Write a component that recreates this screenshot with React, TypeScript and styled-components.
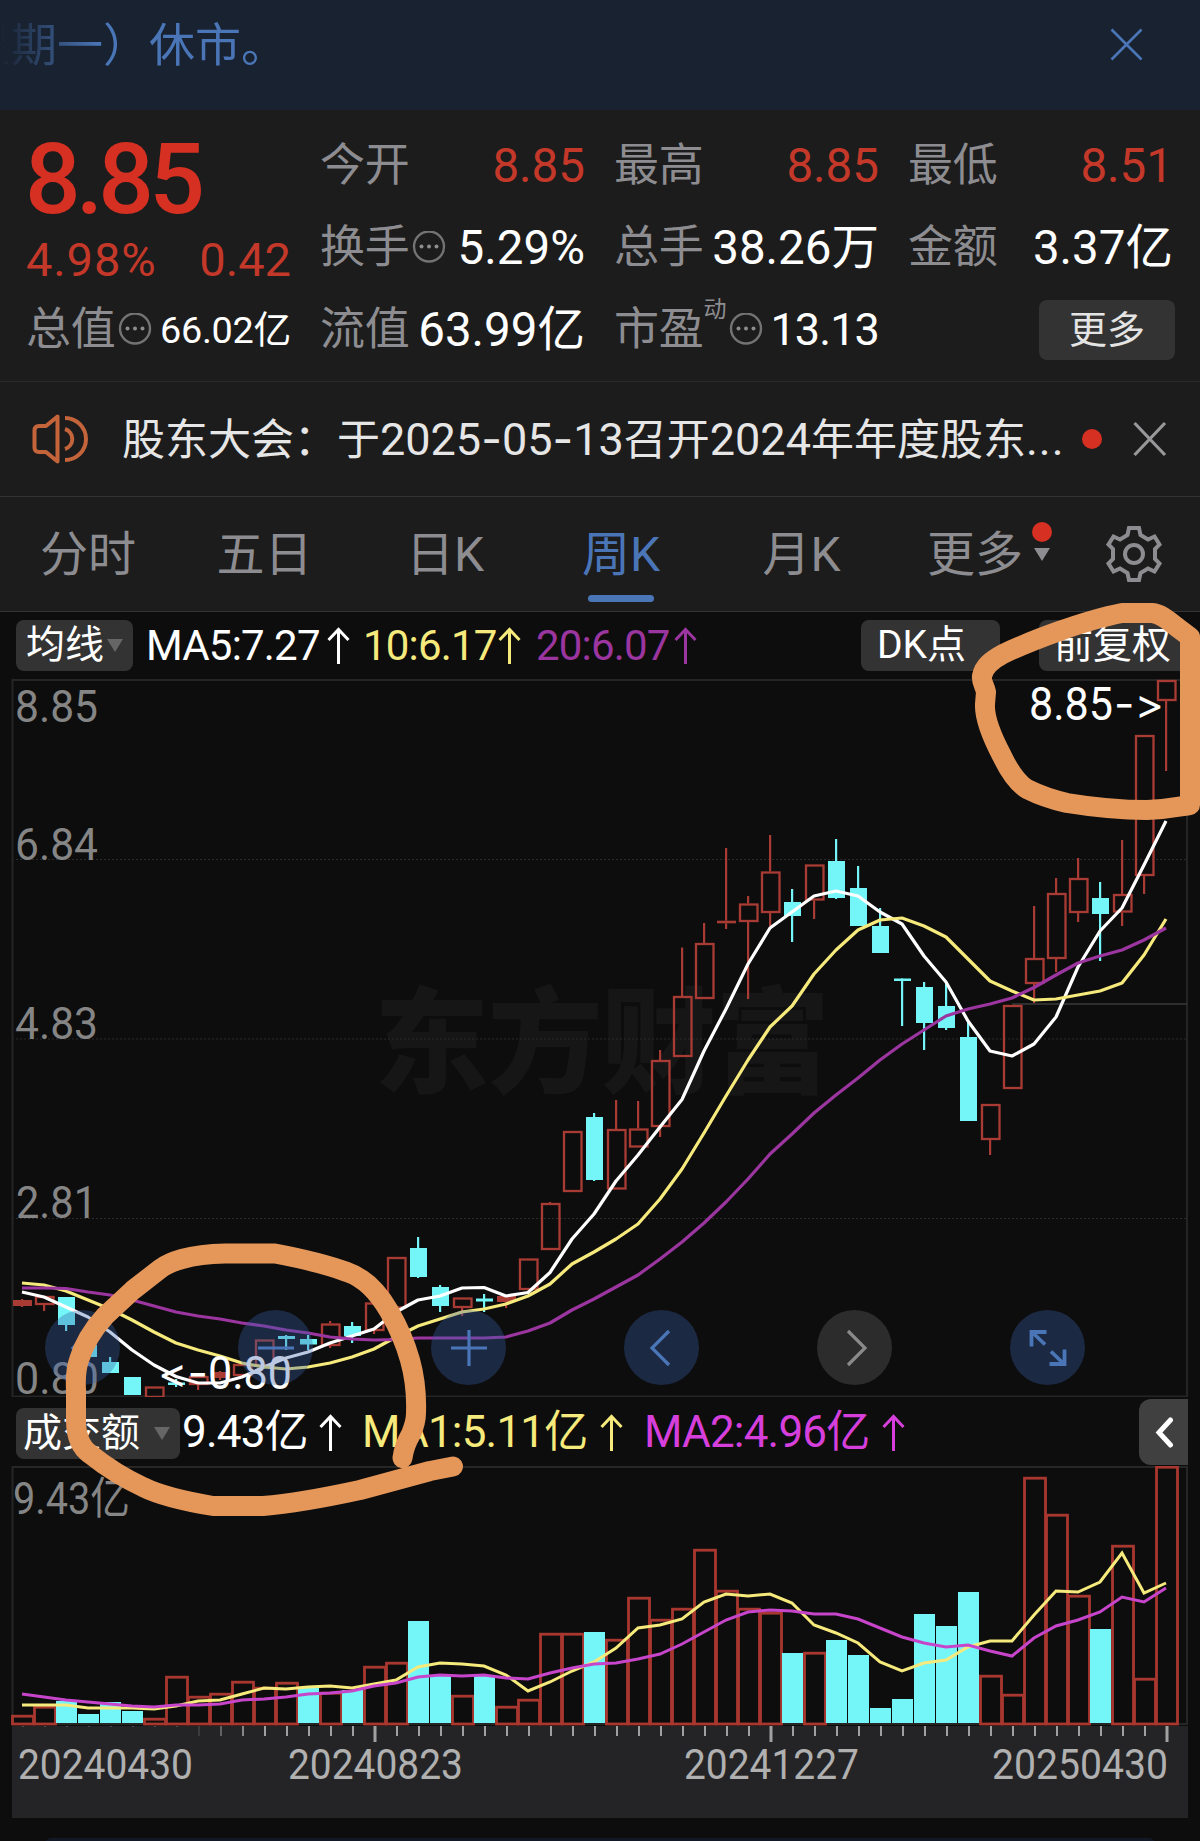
import React from "react";
import styled, { createGlobalStyle, css } from "styled-components";

const RED = "#d63022";
const RED_SOFT = "#c4382a";
const CANDLE_RED = "#a83b33";
const CYAN = "#74f5f7";
const BLUE = "#4a76b8";
const GREY = "#8d8d91";
const YELLOW = "#f6ea7c";

const GlobalStyle = createGlobalStyle`
  * { box-sizing: border-box; }
  body {
    margin: 0;
    background: #0d0d0d;
    font-family: Roboto, "Noto Sans CJK SC", sans-serif;
    color: #fff;
  }
`;

const Page = styled.main`
  width: 1200px;
  height: 1841px;
  position: relative;
  overflow: hidden;
  background: #0d0d0d;
  display: flex;
  flex-direction: column;
  white-space: nowrap;
  line-height: 1;
`;

const Banner = styled.header`
  height: 110px;
  flex: none;
  background: #192230;
  display: flex;
  justify-content: space-between;
  align-items: flex-start;
  padding: 20px 57px 0 0;
`;

const BannerText = styled.div`
  width: 320px;
  height: 50px;
  line-height: 50px;
  font-size: 46px;
  color: ${BLUE};
  text-indent: -35px;
  overflow: hidden;
  mask-image: linear-gradient(90deg, transparent 0, rgba(0, 0, 0, 0.35) 35px, #000 100px);
`;

const BannerClose = styled.svg`
  margin-top: 8px;
`;

const Quote = styled.section`
  height: 272px;
  flex: none;
  background: #1c1c1c;
  display: grid;
  grid-template-columns: repeat(4, 265px);
  column-gap: 29px;
  grid-template-rows: 82px 82px 82px;
  padding: 15px 0 0 26px;
  border-bottom: 1px solid #2a2a2a;
`;

const PriceBlock = styled.div`
  grid-row: 1 / span 2;
  display: flex;
  flex-direction: column;
`;

const Price = styled.div`
  font-size: 98px;
  font-weight: 500;
  line-height: 98px;
  letter-spacing: -4.8px;
  color: ${RED};
  margin: 6px 0 0 -1px;
`;

const ChangeRow = styled.div`
  display: flex;
  justify-content: space-between;
  font-size: 47px;
  line-height: 47px;
  margin-top: 7px;
  color: ${RED_SOFT};
  padding-right: 0;
`;

const Percent = styled.span`
  letter-spacing: 0.9px;
`;

const Cell = styled.div`
  display: flex;
  align-items: center;
  height: 82px;
`;

const Label = styled.span`
  font-size: 45px;
  line-height: 60px;
  letter-spacing: -0.2px;
  color: ${GREY};
`;

const Value = styled.span<{ $tone?: string; $size?: number; $track?: number }>`
  margin-left: auto;
  font-size: ${(p) => p.$size ?? 47.5}px;
  line-height: 60px;
  letter-spacing: ${(p) => p.$track ?? 0}px;
  color: ${(p) => p.$tone ?? "#fff"};
`;

const Sup = styled.span`
  width: 24px;
  font-size: 23px;
  line-height: 24px;
  color: ${GREY};
  align-self: flex-start;
  margin: 9px -1px 0 0;
`;

const InfoDot = styled.svg`
  flex: none;
  margin: 0 0 0 2px;
`;

const MoreButton = styled.button`
  width: 136px;
  height: 60px;
  margin-left: auto;
  margin-right: -2px;
  border: 0;
  border-radius: 8px;
  background: #333;
  color: #e4e4e4;
  font: 38px/55px Roboto, "Noto Sans CJK SC", sans-serif;
  padding: 0;
`;

const Notice = styled.section`
  height: 115px;
  flex: none;
  background: #1c1c1c;
  border-bottom: 1px solid #333;
  display: flex;
  align-items: center;
  padding-left: 30px;
`;

const NoticeText = styled.div`
  width: 960px;
  margin-left: 32px;
  font-size: 43px;
  line-height: 60px;
  color: #e6e6e6;
  display: flex;
  align-items: baseline;
`;

const Digits = styled.span<{ $track?: number }>`
  font-size: 45px;
  letter-spacing: ${(p) => p.$track ?? 0}px;
`;

const Dash = styled.span`
  font-family: Inter, sans-serif;
`;

const Dot = styled.i`
  display: block;
  flex: none;
  width: 20px;
  height: 20px;
  border-radius: 50%;
  background: ${RED};
`;

const NoticeClose = styled.svg`
  margin-left: 31px;
`;

const Tabs = styled.nav`
  height: 115px;
  flex: none;
  background: #1c1c1c;
  border-bottom: 1px solid #343436;
  display: flex;
  align-items: stretch;
`;

const Tab = styled.div<{ $active?: boolean; $w: number }>`
  width: ${(p) => p.$w}px;
  flex: none;
  font-size: 48px;
  line-height: 116px;
  text-align: center;
  color: ${(p) => (p.$active ? BLUE : GREY)};
  ${(p) =>
    p.$active &&
    css`
      &::after {
        content: "";
        display: block;
        width: 66px;
        height: 7px;
        margin: -18px auto 0;
        border-radius: 3.5px;
        background: ${BLUE};
      }
    `}
`;

const MoreMark = styled.div`
  width: 20px;
  flex: none;
  margin-left: -20px;
  display: flex;
  flex-direction: column;
  align-items: center;
  padding-top: 25px;
  gap: 6px;
`;

const Triangle = styled.i<{ $color: string }>`
  flex: none;
  width: 16px;
  height: 13px;
  background: ${(p) => p.$color};
  clip-path: polygon(0 0, 100% 0, 50% 100%);
`;

const CornerMark = styled.i`
  flex: none;
  align-self: flex-end;
  width: 12px;
  height: 12px;
  margin: 0 -4px 9px 0;
  background: #fff;
  clip-path: polygon(100% 0, 100% 100%, 0 100%);
`;

const Gear = styled.svg`
  margin: 24px 0 0 51px;
`;

const StatRow = styled.div<{ $h: number; $pt: number }>`
  height: ${(p) => p.$h}px;
  flex: none;
  display: flex;
  align-items: flex-start;
  padding: ${(p) => p.$pt}px 0 0 16px;
`;

const Chip = styled.div<{ $w: number; $pad: number; $ml?: number }>`
  width: ${(p) => p.$w}px;
  height: 51px;
  flex: none;
  margin-left: ${(p) => p.$ml ?? 0}px;
  border-radius: 8px;
  background: #333;
  font-size: 39px;
  line-height: 47px;
  padding: 0 10px 0 ${(p) => p.$pad}px;
  display: flex;
  align-items: center;
  justify-content: space-between;
`;

const Stat = styled.div<{ $w: number; $color: string; $size?: number; $gap?: number }>`
  width: ${(p) => p.$w}px;
  height: 51px;
  font-size: ${(p) => p.$size ?? 42}px;
  line-height: 51px;
  letter-spacing: -0.8px;
  color: ${(p) => p.$color};
  display: flex;
  align-items: center;
  justify-content: space-between;
  padding-right: ${(p) => p.$gap ?? 15}px;
`;

const Stats = styled.div<{ $ml: number; $shift?: number }>`
  display: flex;
  margin-left: ${(p) => p.$ml}px;
  margin-top: ${(p) => p.$shift ?? 0}px;
`;

const Collapse = styled.div`
  width: 49px;
  height: 66px;
  margin-left: auto;
  margin-right: 12px;
  margin-top: -9px;
  border-radius: 12px 0 0 12px;
  background: #404040;
  display: flex;
  align-items: center;
  justify-content: center;
`;

const ChartArea = styled.section<{ $h: number }>`
  position: relative;
  height: ${(p) => p.$h}px;
  flex: none;
`;

const ChartSvg = styled.svg`
  display: block;
`;

const PointerText = styled.text`
  font-family: Inter, sans-serif;
  font-size: 42px;
  font-feature-settings: "calt" 0, "liga" 0, "dlig" 0;
  font-variant-ligatures: none;
`;

const Controls = styled.div`
  position: absolute;
  left: 45px;
  top: 631px;
  display: flex;
  gap: 118px;
`;

const Round = styled.div<{ $muted?: boolean }>`
  width: 75px;
  height: 75px;
  border-radius: 50%;
  background: ${(p) => (p.$muted ? "rgba(92, 92, 92, 0.4)" : "rgba(57, 98, 169, 0.34)")};
  display: flex;
  align-items: center;
  justify-content: center;
`;

const Axis = styled.footer`
  width: 1176px;
  height: 92px;
  flex: none;
  margin-left: 12px;
  background: #242426;
`;

const Sheet = styled.div`
  width: 1110px;
  height: 12px;
  flex: none;
  margin: 20px auto 0;
  border-radius: 12px;
  background: #121826;
`;

const Marker = styled.svg`
  position: absolute;
  left: 0;
  top: 0;
  pointer-events: none;
`;

/* Weekly candles: up flag, body top, body bottom, wick top, wick bottom */
type Candle = [0 | 1, number, number, number, number];
const candles: Candle[] = [
  [1, 1300, 1306, 1299, 1307], [1, 1296, 1305, 1296, 1311], [0, 1297, 1325, 1297, 1331], [0, 1345, 1357, 1342, 1357],
  [0, 1362, 1373, 1357, 1373], [0, 1377, 1395, 1377, 1395], [1, 1386.5, 1398, 1386.5, 1398], [0, 1382.5, 1385, 1379, 1387],
  [1, 1376, 1385, 1376, 1390], [1, 1372, 1378, 1371, 1380], [1, 1364, 1376, 1364, 1376], [1, 1339.5, 1366, 1339.5, 1366],
  [0, 1336, 1339, 1335, 1350], [0, 1339, 1344.5, 1335, 1350], [1, 1323.5, 1346, 1321, 1348], [0, 1326, 1336, 1322, 1343],
  [1, 1302.5, 1331, 1302.5, 1334], [1, 1257, 1308.5, 1257, 1308.5], [0, 1248, 1277, 1237, 1278], [0, 1287, 1306, 1285, 1312],
  [1, 1297.5, 1308, 1297.5, 1316], [0, 1298.5, 1301.5, 1294, 1312], [1, 1296, 1302, 1296, 1308], [1, 1258.5, 1290, 1258.5, 1290],
  [1, 1203, 1250, 1202, 1250], [1, 1131, 1192, 1131, 1192], [0, 1117, 1180, 1113, 1181], [1, 1129, 1189.5, 1100, 1189.5],
  [1, 1128.5, 1147.5, 1101, 1147.5], [1, 1060, 1127, 1050, 1137], [1, 996, 1057, 947.5, 1057], [1, 943, 999, 923, 999],
  [1, 920.7, 923.3, 848, 929], [1, 903.5, 922, 896, 999], [1, 871.5, 913, 835, 926], [0, 902, 916, 889, 942],
  [1, 864.5, 900.5, 864.5, 919], [0, 861, 898, 839, 899], [0, 888, 926, 866, 926], [0, 926, 953, 908, 953],
  [0, 978.5, 981, 978.5, 1026], [0, 987, 1023, 982, 1050], [0, 1006, 1028, 982, 1030], [0, 1037, 1121, 1022, 1121],
  [1, 1104, 1140, 1104, 1155], [1, 1005, 1089, 1005, 1089], [1, 958, 984, 906, 1003], [1, 893, 959, 878, 972],
  [1, 878, 913, 858, 922], [0, 898, 914, 882, 961], [1, 894, 912.5, 840, 926], [1, 735, 876, 735, 894],
  [1, 680, 701, 680, 771],
];

const ma5 = [1292, 1297, 1307, 1317, 1332, 1350, 1365, 1376.5, 1383, 1383, 1377, 1367, 1358, 1352, 1343, 1336, 1329, 1312, 1300, 1296, 1288, 1287.5, 1296, 1292.5, 1272.5, 1239, 1214, 1181, 1155, 1127, 1099.5, 1051, 1009, 964, 928, 912, 896, 891, 896, 912, 924, 956, 982, 1021, 1051, 1056, 1044, 1017, 967, 931, 908, 865, 821];
const ma10 = [1283, 1285, 1291, 1300, 1309, 1320, 1332, 1343, 1350, 1356, 1363, 1367, 1369, 1367, 1363, 1357, 1349, 1337, 1326, 1319, 1312, 1309, 1304, 1296, 1284, 1264, 1252, 1239, 1224, 1199, 1169, 1133, 1096, 1060, 1027, 1006, 974, 950, 930, 920, 918, 926, 937, 959, 981, 991, 1000, 999, 995, 991, 983, 955, 919];
const ma20 = [1288, 1288, 1288.5, 1292, 1295, 1300, 1306, 1312, 1316, 1319, 1323, 1326, 1330, 1333, 1337, 1339, 1340, 1339.5, 1338, 1338, 1338, 1338, 1337, 1331, 1323, 1310, 1299, 1287, 1275, 1259, 1242, 1223, 1202, 1179, 1154, 1134, 1113, 1095, 1078, 1060, 1044, 1030, 1016, 1009, 1004, 998, 987.5, 975, 963, 956, 950, 940, 928];

const volumeTop = [1715, 1706, 1701, 1714, 1702, 1711, 1718, 1676, 1696, 1693, 1681, 1687, 1682, 1687, 1692, 1690, 1666, 1662, 1621, 1676, 1695, 1676, 1706, 1699, 1633, 1633, 1632, 1639, 1597, 1619, 1608, 1549, 1590, 1608, 1612, 1653, 1652, 1640, 1655, 1708, 1699, 1614, 1626, 1592, 1675, 1694, 1477, 1514, 1595, 1629, 1545, 1678, 1466];
const volumeUp = [1, 1, 0, 0, 0, 0, 1, 1, 1, 1, 1, 1, 1, 0, 1, 0, 1, 1, 0, 0, 1, 0, 1, 1, 1, 1, 0, 1, 1, 1, 1, 1, 1, 1, 1, 0, 1, 0, 0, 0, 0, 0, 0, 0, 1, 1, 1, 1, 1, 0, 1, 1, 1];
const volMa1 = [1705, 1705, 1705, 1708, 1708, 1708, 1709, 1706, 1701, 1700, 1694, 1688, 1689, 1687, 1686, 1688, 1684, 1680, 1667, 1663, 1664, 1666, 1675, 1691, 1682, 1671, 1662, 1648, 1628, 1625, 1619, 1602, 1594, 1596, 1594, 1603, 1625, 1633, 1643, 1662, 1671, 1663, 1660, 1647, 1641, 1641, 1615, 1591, 1592, 1582, 1553, 1593, 1583];
const volMa2 = [1694, 1697, 1700, 1702, 1704, 1706, 1707, 1705, 1705, 1704, 1700, 1699, 1697, 1694, 1693, 1691, 1686, 1683, 1677, 1675, 1676, 1675, 1678, 1679, 1673, 1668, 1664, 1663, 1659, 1654, 1644, 1632, 1620, 1612, 1610, 1611, 1614, 1614, 1619, 1628, 1637, 1643, 1647, 1645, 1651, 1656, 1638, 1626, 1620, 1612, 1597, 1602, 1588];

const xAt = (i: number) => 22 + 22 * i;
const points = (ys: number[]) => ys.map((y, i) => `${xAt(i)},${y}`).join(" ");

const CandleMark = ({ c, i }: { c: Candle; i: number }) => {
  const [up, top, bottom, high, low] = c;
  const x = xAt(i);
  if (!up) {
    return (
      <g fill={CYAN}>
        <rect x={x - 1} y={high} width={2.2} height={low - high} />
        <rect x={x - 8} y={top} width={17} height={bottom - top} />
      </g>
    );
  }
  const thin = bottom - top < 7;
  return (
    <g fill={CANDLE_RED}>
      {top > high && <rect x={x - 1} y={high} width={2.2} height={top - high} />}
      {low > bottom && <rect x={x - 1} y={bottom} width={2.2} height={low - bottom} />}
      {thin ? (
        <rect x={x - 9} y={top} width={19} height={bottom - top} />
      ) : (
        <rect x={x - 8} y={top + 1} width={17.5} height={bottom - top - 2} fill="none" stroke={CANDLE_RED} strokeWidth={2.3} />
      )}
    </g>
  );
};

const Info = () => (
  <InfoDot width="34" height="34" viewBox="0 0 34 34">
    <circle cx="17" cy="15.5" r="15" fill="none" stroke="#737375" strokeWidth="2.4" />
    <circle cx="9.5" cy="15.5" r="2" fill="#8d8d91" />
    <circle cx="17" cy="15.5" r="2" fill="#8d8d91" />
    <circle cx="24.5" cy="15.5" r="2" fill="#8d8d91" />
  </InfoDot>
);

const UpArrow = () => (
  <svg width="23" height="38" viewBox="0 0 23 38" fill="none" stroke="currentColor" strokeWidth="3">
    <path d="M11.5 37V3M1.5 13L11.5 2.5L21.5 13" />
  </svg>
);

const PriceChart = () => (
  <ChartSvg width="1200" height="718" viewBox="0 679 1200 718">
    <text x="374" y="1084" fontSize="115" fontWeight="900" fill="#161616" fontFamily='"Noto Sans CJK SC", sans-serif' textLength="456">
      东方财富
    </text>
    <g stroke="#2b2b2b" strokeWidth="1.2" strokeDasharray="2 2">
      <path d="M12 859.5H1187M12 1039H1187M12 1218.5H1187" />
    </g>
    <path d="M12.5 680H1187V1396.5H12.5Z" fill="none" stroke="#252525" strokeWidth="2" />
    <path d="M1012 1004H1187" stroke="#3a3a3a" strokeWidth="1.6" />
    <g fill="#858585" fontSize="45">
      <text x="15" y="722" textLength="83" lengthAdjust="spacingAndGlyphs">8.85</text>
      <text x="15" y="860" textLength="83" lengthAdjust="spacingAndGlyphs">6.84</text>
      <text x="15" y="1039" textLength="83" lengthAdjust="spacingAndGlyphs">4.83</text>
      <text x="16" y="1218" textLength="81" lengthAdjust="spacingAndGlyphs">2.81</text>
      <text x="15" y="1393.5" textLength="84" lengthAdjust="spacingAndGlyphs">0.80</text>
    </g>
    {candles.map((c, i) => (
      <CandleMark key={i} c={c} i={i} />
    ))}
    <g fill="none" strokeLinejoin="round" strokeWidth="3.2">
      <polyline points={points(ma5)} stroke="#fff" />
      <polyline points={points(ma10)} stroke={YELLOW} />
      <polyline points={points(ma20)} stroke="#9b359f" />
    </g>
    <g fill="#fff" fontSize="46">
      <text x="1029" y="719.5" textLength="84" lengthAdjust="spacingAndGlyphs">8.85</text>
      <PointerText x="1114" y="719" textLength="50" lengthAdjust="spacingAndGlyphs">-&gt;</PointerText>
      <PointerText x="158" y="1388" textLength="50" lengthAdjust="spacingAndGlyphs">&lt;-</PointerText>
      <text x="208" y="1389" textLength="84" lengthAdjust="spacingAndGlyphs">0.80</text>
    </g>
  </ChartSvg>
);

const VolumeChart = () => (
  <ChartSvg width="1200" height="260" viewBox="0 1466 1200 260">
    <path d="M12.5 1467H1187V1724H12.5Z" fill="none" stroke="#262626" strokeWidth="2" />
    <text x="13" y="1514" fontSize="44" fill="#858585" textLength="117" lengthAdjust="spacingAndGlyphs">9.43亿</text>
    {volumeTop.map((top, i) => {
      const x = xAt(i);
      return volumeUp[i] ? (
        <rect key={i} x={x - 9.5} y={top + 1.2} width={21} height={Math.max(1722.8 - top, 2)} fill="none" stroke="#a8372f" strokeWidth={2.8} />
      ) : (
        <rect key={i} x={x - 10} y={top} width={21} height={1723 - top} fill={CYAN} />
      );
    })}
    <g fill="none" strokeWidth="3">
      <polyline points={points(volMa1)} stroke={YELLOW} />
      <polyline points={points(volMa2)} stroke="#c745cb" />
    </g>
  </ChartSvg>
);

const AxisDrawing = () => (
  <ChartSvg width="1176" height="92" viewBox="12 1726 1176 92">
    {candles.map((_, i) => {
      const major = i === 16 || i === 34 || i === 52;
      const fade = i < 8 ? 0.35 : i === 8 ? 0.2 : i === 9 ? 0.5 : i === 10 ? 0.8 : 1;
      return (
        <rect key={i} x={xAt(i) - (major ? 0.5 : 0)} y={1726} width={major ? 3 : 2} height={i < 8 ? 1 : major ? 16 : 10} fill="#a0a0a0" opacity={fade} />
      );
    })}
    <g fill="#b0b0b0" fontSize="42.5">
      <text x="18" y="1779" textLength="175" lengthAdjust="spacingAndGlyphs">20240430</text>
      <text x="288" y="1779" textLength="175" lengthAdjust="spacingAndGlyphs">20240823</text>
      <text x="684" y="1779" textLength="175" lengthAdjust="spacingAndGlyphs">20241227</text>
      <text x="992" y="1779" textLength="176" lengthAdjust="spacingAndGlyphs">20250430</text>
    </g>
  </ChartSvg>
);

const RoundIcon = ({ d, color = BLUE, weight = 3.2 }: { d: string; color?: string; weight?: number }) => (
  <svg width="44" height="44" viewBox="-22 -22 44 44" fill="none" stroke={color} strokeWidth={weight}>
    <path d={d} />
  </svg>
);

export default function App() {
  return (
    <>
      <GlobalStyle />
      <Page>
        <Banner>
          <BannerText>星期一）休市。</BannerText>
          <BannerClose width="33" height="33" viewBox="0 0 33 33" stroke={BLUE} strokeWidth="2.6">
            <path d="M1.5 1.5L31.5 31.5M31.5 1.5L1.5 31.5" />
          </BannerClose>
        </Banner>

        <Quote>
          <PriceBlock>
            <Price>8.85</Price>
            <ChangeRow>
              <Percent>4.98%</Percent>
              <span>0.42</span>
            </ChangeRow>
          </PriceBlock>
          <Cell><Label>今开</Label><Value $tone={RED_SOFT}>8.85</Value></Cell>
          <Cell><Label>最高</Label><Value $tone={RED_SOFT}>8.85</Value></Cell>
          <Cell><Label>最低</Label><Value $tone={RED_SOFT}>8.51</Value></Cell>
          <Cell><Label>换手</Label><Info /><Value>5.29%</Value></Cell>
          <Cell><Label>总手</Label><Value>38.26万</Value></Cell>
          <Cell><Label>金额</Label><Value>3.37亿</Value></Cell>
          <Cell><Label>总值</Label><Info /><Value $size={37.8} $track={-0.3}>66.02亿</Value></Cell>
          <Cell><Label>流值</Label><Value>63.99亿</Value></Cell>
          <Cell><Label>市盈</Label><Sup>动</Sup><Info /><Value $size={45} $track={-0.9}>13.13</Value></Cell>
          <Cell><MoreButton>更多</MoreButton></Cell>
        </Quote>

        <Notice>
          <svg width="60" height="56" viewBox="0 0 60 56" fill="none" stroke="#c4643a" strokeWidth="4">
            <path d="M27.5 5.5V50.5L16 41H9Q4.500 41 4.500 36.500V19.500Q4.500 15 9 15H16Z" strokeLinejoin="round" />
            <path d="M35 18A10.500 10.500 0 0 1 35 38M35 7A21 21 0 0 1 35 49" />
          </svg>
          <NoticeText>
            股东大会：于
            <Digits>2025<Dash>-</Dash>05<Dash>-</Dash>13</Digits>
            召开
            <Digits>2024</Digits>
            年年度股东
            <Digits $track={1}>...</Digits>
          </NoticeText>
          <Dot />
          <NoticeClose width="34" height="36" viewBox="0 0 34 36" stroke="#98989a" strokeWidth="3.2">
            <path d="M1.5 2L32 34M32 2L1.5 34" />
          </NoticeClose>
        </Notice>

        <Tabs>
          <Tab $w={176}>分时</Tab>
          <Tab $w={177}>五日</Tab>
          <Tab $w={184}>日K</Tab>
          <Tab $w={168} $active>周K</Tab>
          <Tab $w={193}>月K</Tab>
          <Tab $w={154}>更多</Tab>
          <MoreMark>
            <Dot />
            <Triangle $color={GREY} />
          </MoreMark>
          <Gear width="62" height="66" viewBox="-31 -33 62 66" fill="none" stroke={GREY} strokeWidth="4">
            <path d="M-5 -26H5L6.500 -19L14 -14.500L20.500 -17.500L25.500 -9.500L21 -5V5L25.500 9.500L20.500 17.500L14 14.500L6.500 19L5 26H-5L-6.500 19L-14 14.500L-20.500 17.500L-25.500 9.500L-21 5V-5L-25.500 -9.500L-20.500 -17.500L-14 -14.500L-6.500 -19Z" />
            <circle r="9" />
          </Gear>
        </Tabs>

        <StatRow $h={67} $pt={8}>
          <Chip $w={117} $pad={10}>均线<Triangle $color="#666" /></Chip>
          <Stats $ml={13}>
            <Stat $w={217} $color="#fff" $gap={13}>MA5:7.27<UpArrow /></Stat>
            <Stat $w={173} $color={YELLOW}>10:6.17<UpArrow /></Stat>
            <Stat $w={174} $color="#9b359f" $gap={13}>20:6.07<UpArrow /></Stat>
          </Stats>
          <Chip $w={139} $pad={16} $ml={151}>DK点<CornerMark /></Chip>
          <Chip $w={149} $pad={15} $ml={39}>前复权</Chip>
        </StatRow>

        <ChartArea $h={718}>
          <PriceChart />
          <Controls>
            <Round><RoundIcon d="M7 -17L-10 0L7 17" /></Round>
            <Round><RoundIcon d="M-18 0H18" /></Round>
            <Round><RoundIcon d="M-18 0H18M0 -18V18" /></Round>
            <Round><RoundIcon d="M7 -17L-10 0L7 17" /></Round>
            <Round $muted><RoundIcon color="#8a8a8a" d="M-7 -17L10 0L-7 17" /></Round>
            <Round><RoundIcon weight={3.8} d="M-16.500 -1.500V-16H-1.500M-16 -16L-3 -3.500M16.500 1.500V16H1.500M16 16L3 3.500" /></Round>
          </Controls>
        </ChartArea>

        <StatRow $h={69} $pt={11}>
          <Chip $w={164} $pad={7}>成交额<Triangle $color="#666" /></Chip>
          <Stats $ml={2} $shift={-1}>
            <Stat $w={180} $color="#fff" $size={44} $gap={20}>9.43亿<UpArrow /></Stat>
            <Stat $w={282} $color={YELLOW} $size={44} $gap={21}>MA1:5.11亿<UpArrow /></Stat>
            <Stat $w={278} $color="#d63fdc" $size={44} $gap={17}>MA2:4.96亿<UpArrow /></Stat>
          </Stats>
          <Collapse>
            <svg width="18" height="31" viewBox="0 0 18 31" fill="none" stroke="#fff" strokeWidth="5" strokeLinecap="round">
              <path d="M15.5 3L4 15.5L15.5 28" />
            </svg>
          </Collapse>
        </StatRow>

        <ChartArea $h={260}>
          <VolumeChart />
        </ChartArea>
        <Axis>
          <AxisDrawing />
        </Axis>
        <Sheet />

        <Marker width="1200" height="1841" fill="none" stroke="#e5975a" strokeWidth="20" strokeLinecap="round" strokeLinejoin="round">
          <path d="M402.5 1458Q404 1446 411 1434Q416 1422 416 1413Q417 1385 410 1360Q403 1335 389 1311Q371 1280 347 1272Q320 1262 275 1253.5H225Q200 1254 182 1259Q168 1263 160 1269L133 1290L105 1316Q86 1337 79 1360Q75 1372 76 1390V1420Q76 1444 90 1454Q115 1474 143 1487Q165 1498 213 1506H263Q300 1503 360 1490L430 1471L453 1466.5" />
          <path d="M986 692C985 686 981 682 982 676C984 666 992 660 1003 654C1030 641 1085 620 1122 613H1152C1163 614 1171 623 1178 628L1190 637V805C1182 806 1170 809 1147 810Q1110 810 1067 803Q1045 798 1027 789Q1014 781 1002 756Q984 722 985 704Z" />
        </Marker>
      </Page>
    </>
  );
}
